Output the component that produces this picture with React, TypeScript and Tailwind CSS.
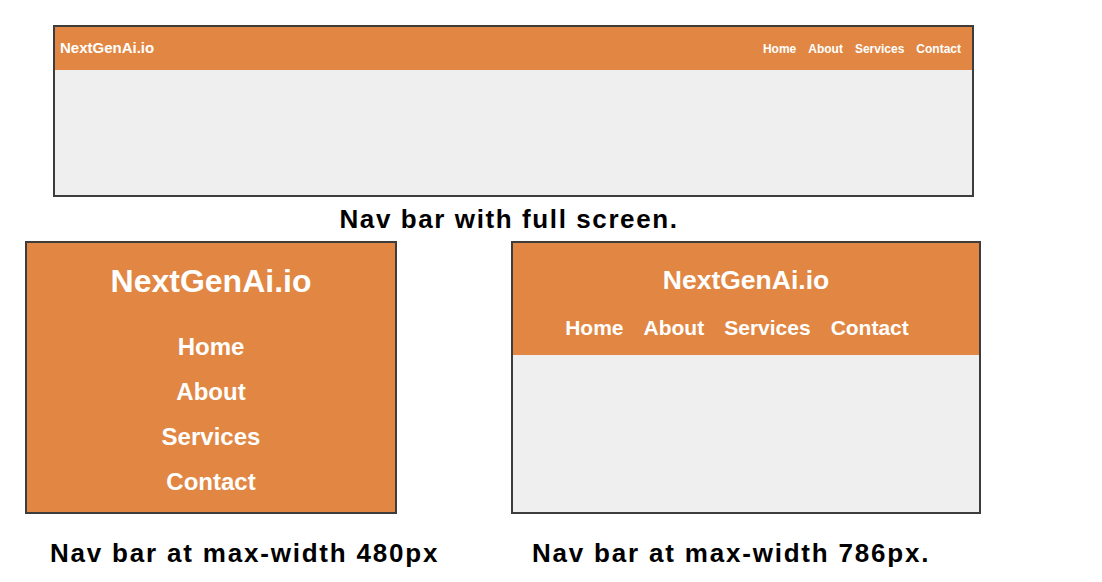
import React from 'react';

const links = ['Home', 'About', 'Services', 'Contact'];

const font = { fontFamily: '"Liberation Sans", Arial, sans-serif' };

const App: React.FC = () => {
  return (
    <div className="w-[1102px] h-[582px] bg-white overflow-hidden" style={font}>
      {/* full screen */}
      <div className="pl-[53px] pt-[25px]">
        <div className="w-[921px] h-[172px] border-2 border-[#3d3d3d] bg-[#efefef] flex flex-col">
          <div className="h-[43px] bg-[#e18743] flex items-center justify-between px-[5px]">
            <span className="text-white font-bold text-[15px]">NextGenAi.io</span>
            <div className="flex gap-[12px] pr-[6px]">
              {links.map((l) => (
                <span key={l} className="text-white font-bold text-[12px]">{l}</span>
              ))}
            </div>
          </div>
        </div>
        <div className="w-[912px] text-center text-black font-bold text-[26px] tracking-[1.6px] leading-[44px]">
          Nav bar with full screen.
        </div>
      </div>

      <div className="flex">
        {/* 480px */}
        <div className="pl-[25px] w-[511px]">
          <div className="w-[372px] h-[273px] border-2 border-[#3d3d3d] bg-[#e18743] flex flex-col items-center">
            <div className="text-white font-bold text-[32px] mt-[18px] leading-[40px]">NextGenAi.io</div>
            <div className="flex flex-col items-center mt-[30px] gap-[13px]">
              {links.map((l) => (
                <span key={l} className="text-white font-bold text-[24px] leading-[32px]">{l}</span>
              ))}
            </div>
          </div>
          <div className="pl-[25px] pt-[23px] text-black font-bold text-[26px] tracking-[1.8px] leading-[32px]">
            Nav bar at max-width 480px
          </div>
        </div>

        {/* 786px */}
        <div>
          <div className="w-[470px] h-[273px] border-2 border-[#3d3d3d] bg-[#efefef] flex flex-col">
            <div className="h-[112px] bg-[#e18743] flex flex-col items-center">
              <div className="text-white font-bold text-[26.5px] mt-[20px] leading-[34px]">NextGenAi.io</div>
              <div className="flex gap-[20px] mt-[17px] mr-[18px]">
                {links.map((l) => (
                  <span key={l} className="text-white font-bold text-[21px] leading-[28px]">{l}</span>
                ))}
              </div>
            </div>
          </div>
          <div className="pl-[21px] pt-[23px] text-black font-bold text-[26px] tracking-[1.8px] leading-[32px]">
            Nav bar at max-width 786px.
          </div>
        </div>
      </div>
    </div>
  );
};

export default App;
